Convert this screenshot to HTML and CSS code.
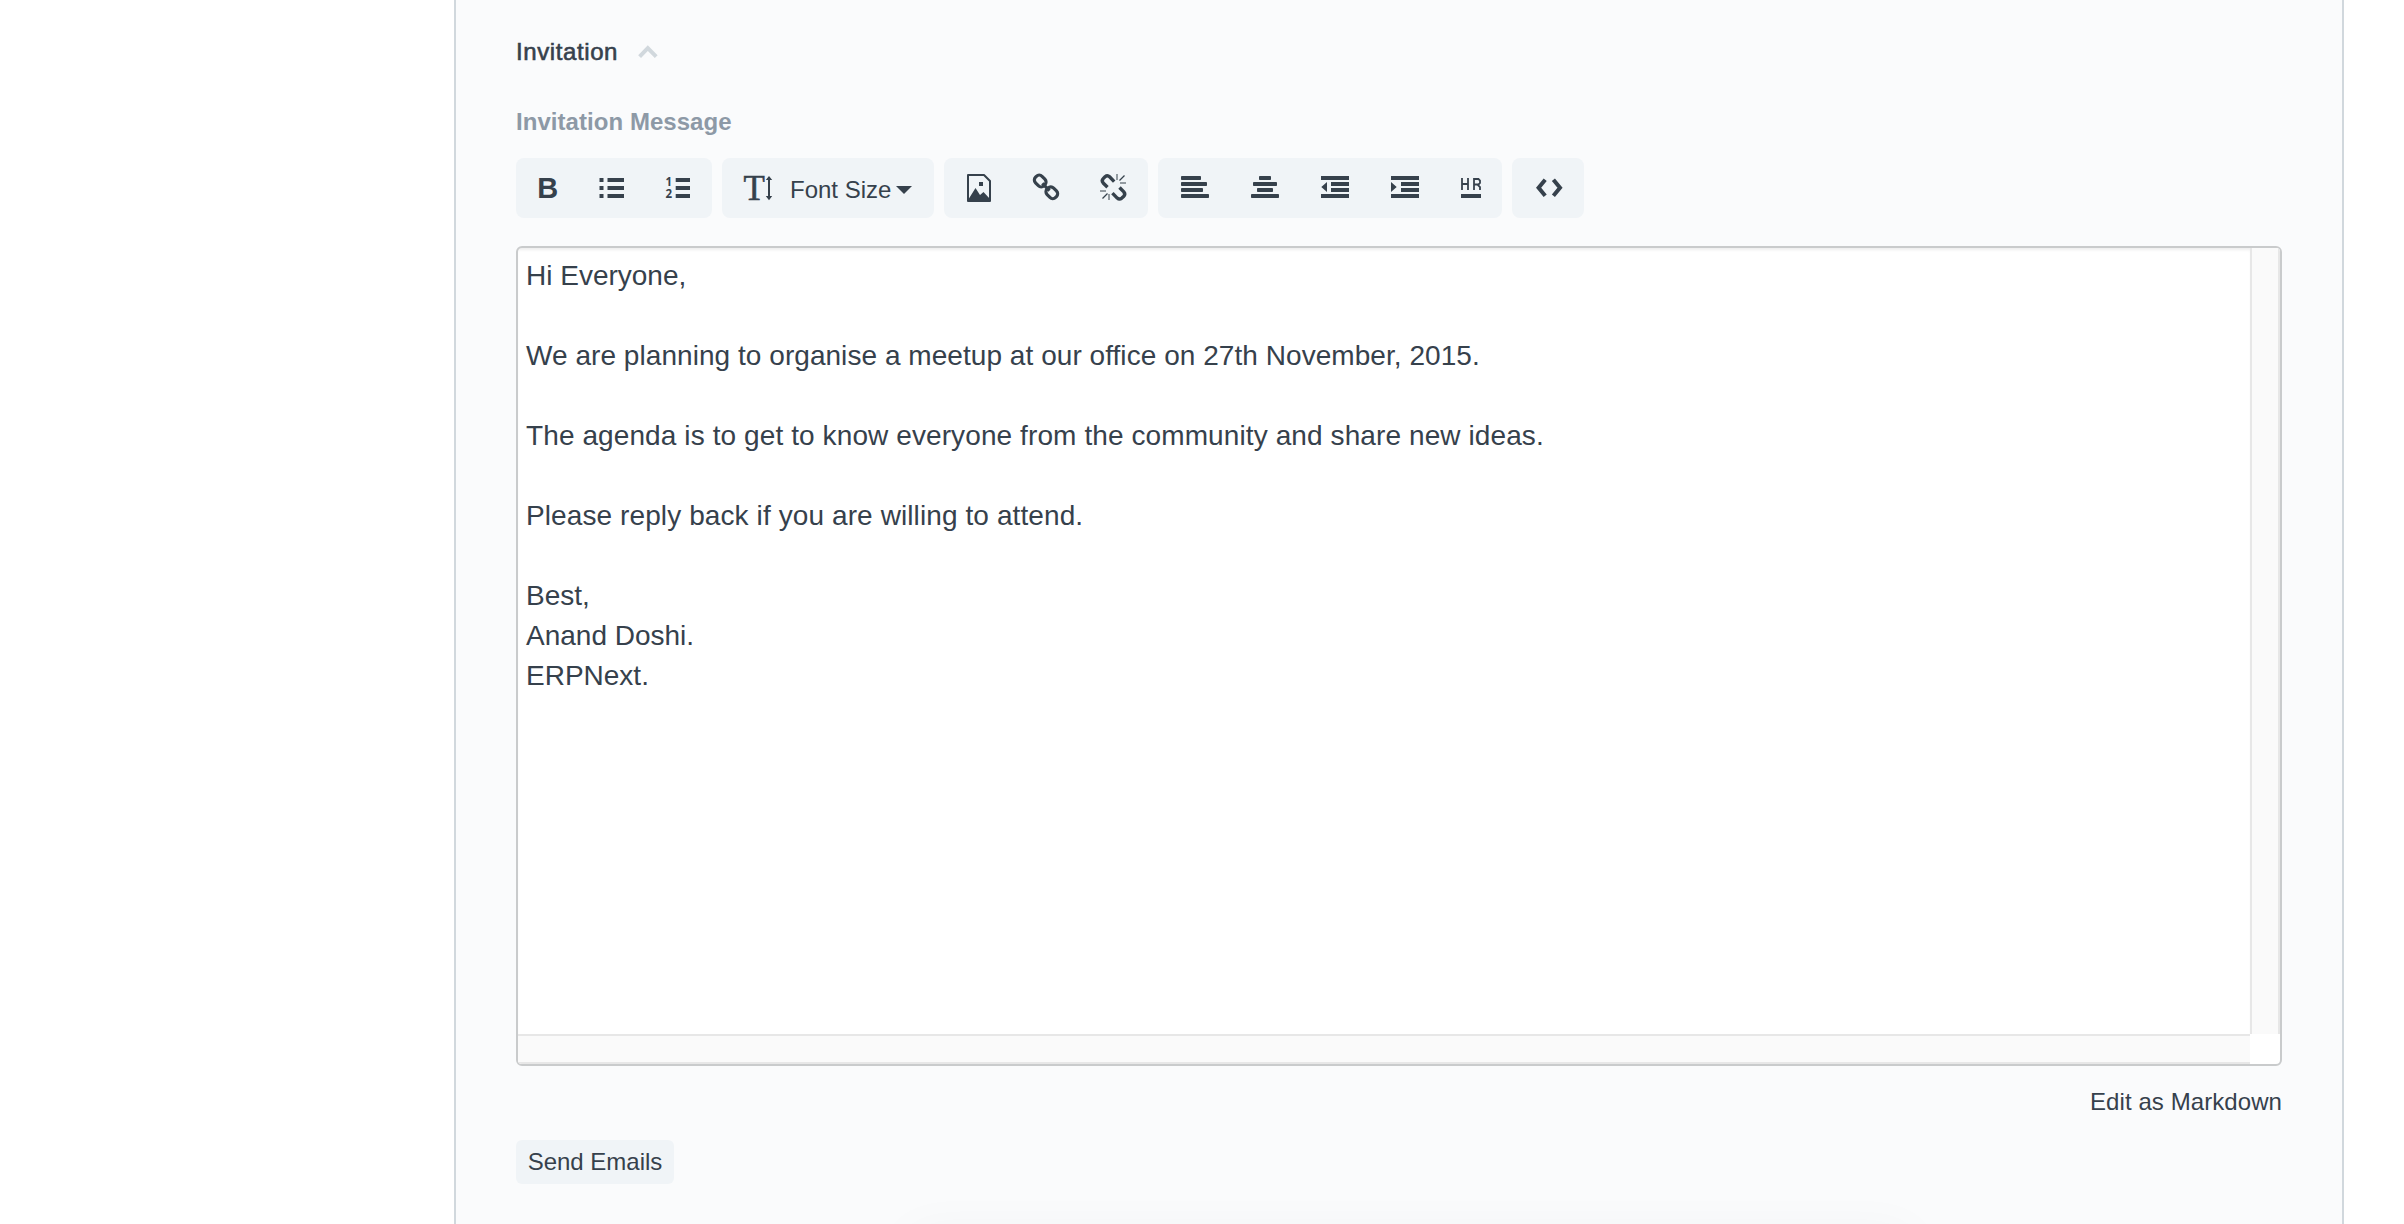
FILE: index.html
```html
<!DOCTYPE html>
<html lang="en">
<head>
<meta charset="utf-8">
<title>Invitation</title>
<link rel="stylesheet" href="styles.css">
</head>
<body>
<div class="page">
<main class="panel">
  <h2 class="section-head"><span class="section-title">Invitation</span>
    <svg class="chevron" viewBox="0 0 20 14"><path d="M1.6 11.6 9.8 3.2l8.400 8.400" fill="none" stroke="currentColor" stroke-width="4"/></svg>
  </h2>
  <div class="label">Invitation Message</div>

  <div class="toolbar">
    <div class="group lists">
      <button class="tool"><svg class="icon" viewBox="0 0 36 36"><text class="glyph-bold" x="7.3" y="28">B</text></svg></button>
      <button class="tool"><svg class="icon" viewBox="0 0 36 36"><path d="M5.500 8h4v4h-4zM5.500 16h4v4h-4zM5.500 24h4v4h-4zM13.500 8H30v4H13.500zM13.500 16H30v4H13.500zM13.500 24H30v4H13.500z"/></svg></button>
      <button class="tool"><svg class="icon" viewBox="0 0 36 36"><path d="M15.700 8H30v4H15.700zM15.700 16H30v4H15.700zM15.700 24H30v4H15.700z"/><text class="glyph-num" x="5.600" y="16">1</text><text class="glyph-num" x="5.400" y="28">2</text></svg></button>
    </div>
    <div class="group font-size">
      <button class="tool tool-text"><svg class="icon" viewBox="0 0 36 36"><text class="glyph-serif" x="6.400" y="29.800">T</text><path d="M32 6l3.200 4H33v16h2.200L32 30.200 28.800 26H31V10h-2.200z"/></svg><span>Font Size</span><svg class="caret" viewBox="0 0 16 8"><path d="M0 0h16L8 8z"/></svg></button>
    </div>
    <div class="group media">
      <button class="tool"><svg class="icon" viewBox="0 0 36 36"><path d="M7 5h16l6 6v20H7z" fill="none" stroke="currentColor" stroke-width="2" stroke-linejoin="round"/><path d="M18 12h4v4h-4zM7 30l7.500-12 4.500 7 3.500-3L29 29v3H7z"/></svg></button>
      <button class="tool"><svg class="icon" viewBox="0 0 36 36"><g fill="none" stroke="currentColor" stroke-width="3.200"><rect x="-6" y="-4.600" width="12" height="9.200" rx="4" transform="translate(12.2 11) rotate(45)"/><rect x="-6" y="-4.600" width="12" height="9.200" rx="4" transform="translate(23.8 22.8) rotate(45)"/><path d="M14.300 13.400l7.200 7.200"/></g></svg></button>
      <button class="tool"><svg class="icon" viewBox="0 0 36 36"><g fill="none" stroke="currentColor"><path d="M12.500 17.200 8.200 13q-2-2.400.2-4.600l1.600-1.600q2.400-2 4.600 0l4.600 4.800M24.500 17.500l4.300 4.400q2 2.400-.2 4.500l-1.800 1.700q-2.400 2-4.600 0l-4.800-5" stroke-width="3.400"/><path d="M24.500 10.500l5-5M12.500 23.500l-5 5" stroke-width="1.300"/><path d="M22 4v6M25 13h6M5 21h6M14 24v6" stroke-width="2" opacity=".5"/></g></svg></button>
    </div>
    <div class="group align">
      <button class="tool"><svg class="icon" viewBox="0 0 36 36"><rect x="4" y="6" width="20" height="4" rx=".8"/><rect x="4" y="12" width="26" height="4" rx=".8"/><rect x="4" y="18" width="22" height="4" rx=".8"/><rect x="4" y="24" width="28" height="4" rx=".8"/></svg></button>
      <button class="tool"><svg class="icon" viewBox="0 0 36 36"><rect x="12" y="6" width="12" height="4" rx=".8"/><rect x="6" y="12" width="24" height="4" rx=".8"/><rect x="10" y="18" width="16" height="4" rx=".8"/><rect x="4" y="24" width="28" height="4" rx=".8"/></svg></button>
      <button class="tool"><svg class="icon" viewBox="0 0 36 36"><path d="M4 6h28v4H4zM14 12h18v4H14zM14 18h18v4H14zM4 24h28v4H4zM10 12v10l-5.700-5z"/></svg></button>
      <button class="tool"><svg class="icon" viewBox="0 0 36 36"><path d="M4 6h28v4H4zM14 12h18v4H14zM14 18h18v4H14zM4 24h28v4H4zM4 12v10l5.700-5z"/></svg></button>
      <button class="tool"><svg class="icon" viewBox="0 0 36 36"><path d="M9 24h20v4H9z"/><path d="M10 8v12M16 8v12M10 14h6M22 20V9h4.500l1.500 1.500v2.500l-1.500 1.500H22M25.500 14.500l2.500 2.500v3" fill="none" stroke="currentColor" stroke-width="1.800"/></svg></button>
    </div>
    <div class="group source">
      <button class="tool"><svg class="icon" viewBox="0 0 36 36"><path d="M15.200 9.700 8.600 17.700l6.600 8M23.400 9.700l6.600 8-6.600 8" fill="none" stroke="currentColor" stroke-width="4"/></svg></button>
    </div>
  </div>

  <div class="editor">
    <div class="message">
      <p>Hi Everyone,</p>
      <p class="loose">We are planning to organise a meetup at our office on 27th November, 2015.</p>
      <p class="looser">The agenda is to get to know everyone from the community and share new ideas.</p>
      <p class="looser">Please reply back if you are willing to attend.</p>
      <p>Best,<br>Anand Doshi.<br>ERPNext.</p>
    </div>
    <div class="scroll-y"></div>
    <div class="scroll-x"></div>
    <div class="scroll-corner"></div>
  </div>

  <a class="markdown-link">Edit as Markdown</a>
  <button class="send">Send Emails</button>
</main>
<div class="bottom-shadow"></div>
</div>
</body>
</html>
```

FILE: styles.css
```css
* {
  box-sizing: border-box;
}

body {
  margin: 0;
  background: #fff;
  color: #36414c;
  font: 24px/34px "Liberation Sans", Arial, sans-serif;
}

button {
  margin: 0;
  padding: 0;
  border: 0;
  background: none;
  color: inherit;
  font: inherit;
}

.page {
  position: relative;
  height: 1224px;
  overflow: hidden;
}

.panel {
  display: flex;
  flex-direction: column;
  width: 1890px;
  height: 1224px;
  margin-left: 454px;
  padding: 35px 60px 0;
  border: solid #d1d8dd;
  border-width: 0 2px;
  background: #fafbfc;
}

.section-head {
  display: flex;
  align-items: center;
  gap: 20px;
  height: 34px;
  margin: 0 0 36px;
  font-size: 24px;
  font-weight: 400;
}

.section-title {
  letter-spacing: 0.6px;
  -webkit-text-stroke: 0.6px currentColor;
}

.chevron {
  width: 20px;
  height: 14px;
  color: #d1d8dd;
}

.label {
  margin-bottom: 19px;
  color: #8d99a6;
  font-weight: 700;
  letter-spacing: 0.05px;
}

.toolbar {
  display: flex;
  gap: 10px;
  margin-bottom: 28px;
}

.group {
  display: grid;
  height: 60px;
  border-radius: 8px;
  background: #f0f4f7;
}

.lists { grid-template-columns: 64px 64px 68px; }
.font-size { grid-template-columns: 212px; }
.media { grid-template-columns: 70px 64px 70px; }
.align { grid-template-columns: 74px 66px 74px 66px 64px; }
.source { grid-template-columns: 72px; }

.tool {
  display: flex;
  align-items: center;
  justify-content: center;
}

.tool-text {
  justify-content: flex-start;
  padding-left: 15px;
}

.tool-text span {
  padding: 3px 5px 0 17px;
}

.icon {
  flex: none;
  width: 36px;
  height: 36px;
  overflow: visible;
  fill: currentColor;
}

.caret {
  width: 16px;
  height: 8px;
  margin-top: 4px;
  fill: currentColor;
}

.glyph-bold {
  font: 700 29px "Liberation Sans", sans-serif;
}

.glyph-num {
  font: 700 11.5px "Open Sans", sans-serif;
}

.glyph-serif {
  font: 35px "Liberation Serif", serif;
  stroke: currentColor;
  stroke-width: 0.5px;
}

.editor {
  display: grid;
  grid-template-columns: 1fr 30px;
  grid-template-rows: 1fr 30px;
  height: 820px;
  border: 2px solid #c9cbcc;
  border-radius: 6px;
  background: #fff;
  overflow: hidden;
}

.message {
  padding: 8px;
  box-shadow: inset 0 3px 3px -1px rgba(0, 0, 0, 0.07);
  font-size: 28px;
  line-height: 40px;
}

.message p {
  margin: 0 0 40px;
}

.message .loose { letter-spacing: 0.05px; }
.message .looser { letter-spacing: 0.1px; }

.scroll-y {
  border: solid #e7e7e7;
  border-width: 0 2px;
  background: #fafafa;
}

.scroll-x {
  border: solid #e7e7e7;
  border-width: 2px 0;
  background: #fafafa;
}

.markdown-link {
  align-self: flex-end;
  margin-top: 19px;
  letter-spacing: 0.08px;
}

.send {
  align-self: flex-start;
  width: 158px;
  height: 44px;
  margin-top: 21px;
  border-radius: 6px;
  background: #f0f4f7;
}

/* Soft edge of the dialog that sits below the fold */
.bottom-shadow {
  position: absolute;
  top: 1232px;
  left: 910px;
  width: 1000px;
  height: 60px;
  box-shadow: 0 0 50px rgba(0, 0, 0, 0.04);
}
```
